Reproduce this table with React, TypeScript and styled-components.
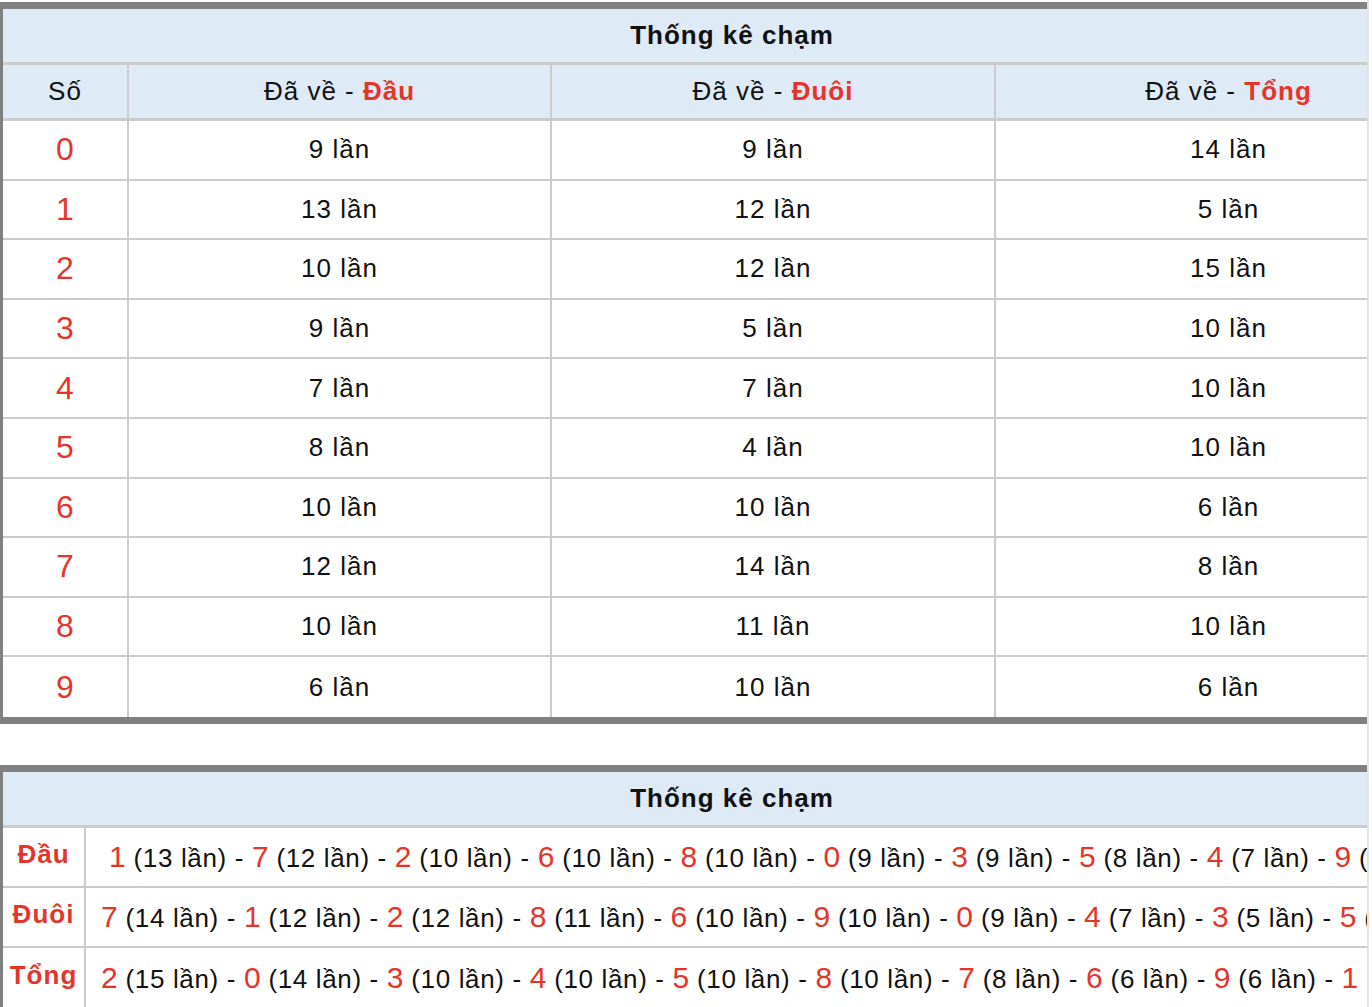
import { Fragment } from 'react'
import styled, { createGlobalStyle } from 'styled-components'

const red = '#e5352b'
const line = '#cbcbcb'
const headBg = '#deeaf5'

const GlobalStyle = createGlobalStyle`
  * {
    box-sizing: border-box;
  }
  body {
    margin: 0;
    background: #fff;
    color: #111;
    font-family: "Liberation Sans", Arial, sans-serif;
  }
`

const Page = styled.div`
  width: 1369px;
  min-height: 100vh;
  padding-top: 2px;
  overflow: hidden;
  border-right: 2px solid #e1e1e1;
`

const Board = styled.section`
  width: 1461px;
  border: solid #808080;
  border-width: 7px 0 7px 3px;
  & + & {
    margin-top: 41px;
  }
`

const Title = styled.div`
  display: flex;
  align-items: center;
  justify-content: center;
  height: 56px;
  background: ${headBg};
  border-bottom: 3px solid ${line};
  font-size: 26px;
  font-weight: 700;
  letter-spacing: 1px;
`

const Row = styled.div<{ $cols: string; $h: number }>`
  display: grid;
  grid-template-columns: ${(p) => p.$cols};
  height: ${(p) => p.$h}px;
  border-bottom: 2px solid ${line};
  &:last-child {
    border-bottom: 0;
  }
`

const HeadRow = styled(Row)`
  background: ${headBg};
  border-bottom: 3px solid ${line};
`

const Cell = styled.div`
  display: flex;
  align-items: center;
  justify-content: center;
  border-right: 2px solid ${line};
  font-size: 26px;
  letter-spacing: 1px;
  white-space: nowrap;
  &:last-child {
    border-right: 0;
  }
`

const Label = styled(Cell)`
  color: ${red};
  font-weight: 700;
  padding-bottom: 4px;
`

const Summary = styled(Cell)<{ $lead?: boolean }>`
  justify-content: flex-start;
  padding-left: ${(p) => (p.$lead ? 23 : 15)}px;
  letter-spacing: 0.64px;
`

const Accent = styled.b`
  color: ${red};
`

const Num = styled.span<{ $size: number }>`
  color: ${red};
  font-size: ${(p) => p.$size}px;
  letter-spacing: 0;
`

const cols = '126px 423px 444px 1fr'

const stats = [
  [0, 9, 9, 14],
  [1, 13, 12, 5],
  [2, 10, 12, 15],
  [3, 9, 5, 10],
  [4, 7, 7, 10],
  [5, 8, 4, 10],
  [6, 10, 10, 6],
  [7, 12, 14, 8],
  [8, 10, 11, 10],
  [9, 6, 10, 6],
]

const ranks: { label: string; items: number[][] }[] = [
  {
    label: 'Đầu',
    items: [[1, 13], [7, 12], [2, 10], [6, 10], [8, 10], [0, 9], [3, 9], [5, 8], [4, 7], [9, 6]],
  },
  {
    label: 'Đuôi',
    items: [[7, 14], [1, 12], [2, 12], [8, 11], [6, 10], [9, 10], [0, 9], [4, 7], [3, 5], [5, 4]],
  },
  {
    label: 'Tổng',
    items: [[2, 15], [0, 14], [3, 10], [4, 10], [5, 10], [8, 10], [7, 8], [6, 6], [9, 6], [1, 5]],
  },
]

export default function App() {
  return (
    <>
      <GlobalStyle />
      <Page>
        <Board>
          <Title>Thống kê chạm</Title>
          <HeadRow $cols={cols} $h={56}>
            <Cell>Số</Cell>
            <Cell>
              <span>
                Đã về - <Accent>Đầu</Accent>
              </span>
            </Cell>
            <Cell>
              <span>
                Đã về - <Accent>Đuôi</Accent>
              </span>
            </Cell>
            <Cell>
              <span>
                Đã về - <Accent>Tổng</Accent>
              </span>
            </Cell>
          </HeadRow>
          {stats.map(([n, a, b, c]) => (
            <Row key={n} $cols={cols} $h={59.6}>
              <Cell>
                <Num $size={32}>{n}</Num>
              </Cell>
              <Cell>{a} lần</Cell>
              <Cell>{b} lần</Cell>
              <Cell>{c} lần</Cell>
            </Row>
          ))}
        </Board>

        <Board>
          <Title>Thống kê chạm</Title>
          {ranks.map((r, ri) => (
            <Row key={r.label} $cols="83px 1fr" $h={60}>
              <Label>{r.label}</Label>
              <Summary $lead={ri === 0}>
                <span>
                  {r.items.map(([n, c], i) => (
                    <Fragment key={n}>
                      {i > 0 && ' - '}
                      <Num $size={30}>{n}</Num> ({c} lần)
                    </Fragment>
                  ))}
                </span>
              </Summary>
            </Row>
          ))}
        </Board>
      </Page>
    </>
  )
}
